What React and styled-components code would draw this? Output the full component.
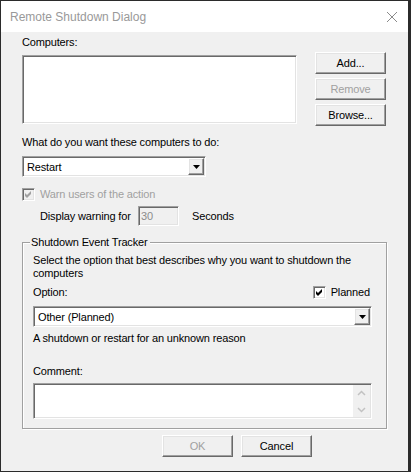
import React from "react";
import styled, { createGlobalStyle, css } from "styled-components";

const GlobalStyle = createGlobalStyle`
  html, body { margin: 0; padding: 0; background: #2b2b2b; }
  body { width: 411px; height: 472px; overflow: hidden; }
  #root { box-sizing: border-box; width: 411px; height: 472px; padding: 1px 0 0 1px; }
`;

const sunken = css`
  box-sizing: border-box;
  border: 1px solid;
  border-color: #a0a0a0 #ffffff #ffffff #a0a0a0;
  box-shadow: inset 1px 1px 0 #696969, inset -1px -1px 0 #e3e3e3;
`;

const raised = css`
  box-sizing: border-box;
  border: 1px solid;
  border-color: #ffffff #696969 #696969 #ffffff;
  box-shadow: inset -1px -1px 0 #a0a0a0, inset 1px 1px 0 #e3e3e3;
  background: #f0f0f0;
`;

const Window = styled.div`
  box-sizing: border-box;
  width: 407px;
  height: 470px;
  display: flex;
  flex-direction: column;
  background: #f0f0f0;
  font-family: "Liberation Sans", Arial, sans-serif;
  font-size: 11px;
  letter-spacing: -0.15px;
  color: #000;
`;

const TitleBar = styled.div`
  flex: none;
  height: 31px;
  background: #ffffff;
  display: flex;
  align-items: center;
  justify-content: space-between;
  padding: 0 10px 0 9px;
  font-family: "Liberation Sans", Arial, sans-serif;
  font-size: 12px;
  letter-spacing: normal;
  color: #999999;
`;

const Body = styled.div`
  flex: 1;
  display: flex;
  flex-direction: column;
  align-items: flex-start;
  padding-left: 21px;
`;

const Label = styled.div`
  line-height: 13px;
  white-space: nowrap;
  margin-top: ${(p) => p.$mt || 0}px;
  color: ${(p) => (p.$disabled ? "#a0a0a0" : "#000")};
`;

const TopRow = styled.div`
  display: flex;
  align-items: flex-start;
  margin-top: 3px;
`;

const ListBox = styled.div`
  ${sunken};
  background: #ffffff;
  width: 275px;
  height: 69px;
  margin-top: 3px;
`;

const ButtonColumn = styled.div`
  display: flex;
  flex-direction: column;
  gap: 4px;
  margin-left: 18px;
`;

const Button = styled.button`
  ${raised};
  width: 71px;
  height: 22px;
  padding: 0;
  font-family: "Liberation Sans", Arial, sans-serif;
  font-size: 11px;
  letter-spacing: -0.15px;
  color: ${(p) => (p.disabled ? "#a0a0a0" : "#000")};
`;

const Combo = styled.div`
  ${sunken};
  width: ${(p) => p.$w}px;
  height: 21px;
  margin-top: 7px;
  background: #ffffff;
  display: flex;
  align-items: center;
  padding: 1px 1px 1px 4px;
`;

const ComboText = styled.span`
  flex: 1;
  white-space: nowrap;
`;

const DropButton = styled.span`
  ${raised};
  width: 16px;
  height: 17px;
  display: flex;
  align-items: center;
  justify-content: center;
`;

const CheckRow = styled.div`
  display: flex;
  align-items: center;
  gap: 5px;
  margin-top: ${(p) => p.$mt || 0}px;
  margin-right: ${(p) => p.$mr || 0}px;
  color: ${(p) => (p.$disabled ? "#a0a0a0" : "#000")};
  line-height: 13px;
`;

const CheckBox = styled.span`
  ${sunken};
  width: 13px;
  height: 13px;
  background: ${(p) => (p.$disabled ? "#f0f0f0" : "#ffffff")};
  display: flex;
  align-items: center;
  justify-content: center;
`;

const WarnRow = styled.div`
  display: flex;
  align-items: center;
  height: 20px;
  margin-top: 5px;
  padding-left: 18px;
  line-height: 13px;
`;

const WarnLabel = styled.span`
  width: 98px;
  white-space: nowrap;
`;

const SmallEdit = styled.div`
  ${sunken};
  width: 41px;
  height: 20px;
  background: #f0f0f0;
  color: #8c8c8c;
  display: flex;
  align-items: center;
  padding-left: 2px;
`;

const Unit = styled.span`
  margin-left: 13px;
`;

const Group = styled.div`
  position: relative;
  box-sizing: border-box;
  width: 365px;
  margin-top: 16px;
  border: 1px solid #a0a0a0;
  box-shadow: 1px 1px 0 #ffffff, inset 1px 1px 0 #ffffff;
  padding: 11px 14px 9px 10px;
  display: flex;
  flex-direction: column;
`;

const Legend = styled.span`
  position: absolute;
  top: -7px;
  left: 7px;
  padding: 0 2px 0 1px;
  background: #f0f0f0;
  line-height: 13px;
  white-space: nowrap;
`;

const OptionRow = styled.div`
  display: flex;
  align-items: center;
  justify-content: space-between;
  margin-top: 6px;
  line-height: 13px;
`;

const CommentBox = styled.div`
  ${sunken};
  height: 36px;
  margin-top: 5px;
  background: #ffffff;
  display: flex;
  justify-content: flex-end;
  padding: 1px;
`;

const ScrollBar = styled.div`
  width: 17px;
  background: #f0f0f0;
  display: flex;
  flex-direction: column;
  justify-content: space-between;
`;

const ScrollArrow = styled.span`
  height: 15px;
  display: flex;
  align-items: center;
  justify-content: center;
`;

const Footer = styled.div`
  display: flex;
  gap: 8px;
  margin-top: 6px;
  margin-left: 140px;
`;

const Arrow = () => (
  <svg width="7" height="4" viewBox="0 0 7 4">
    <polygon points="0,0 7,0 3.5,4" fill="#000" />
  </svg>
);

const Check = ({ color }) => (
  <svg width="7" height="7" viewBox="0 0 7 7">
    <polygon points="0,2 2,4 6,0 6,3 2,7 0,5" fill={color} />
  </svg>
);

const Chevron = ({ up }) => (
  <svg width="9" height="6" viewBox="0 0 9 6">
    <polyline
      points={up ? "1,5 4.5,1.5 8,5" : "1,1 4.5,4.5 8,1"}
      fill="none"
      stroke="#c2c2c2"
      strokeWidth="1.5"
    />
  </svg>
);

const CloseIcon = () => (
  <svg width="12" height="12" viewBox="0 0 12 12">
    <path d="M1 1 L11 11 M11 1 L1 11" stroke="#8a8a8a" strokeWidth="1" fill="none" />
  </svg>
);

export default function App() {
  return (
    <>
      <GlobalStyle />
      <Window>
        <TitleBar>
          <span>Remote Shutdown Dialog</span>
          <CloseIcon />
        </TitleBar>
        <Body>
          <Label $mt={4}>Computers:</Label>
          <TopRow>
            <ListBox />
            <ButtonColumn>
              <Button>Add...</Button>
              <Button disabled>Remove</Button>
              <Button>Browse...</Button>
            </ButtonColumn>
          </TopRow>

          <Label $mt={10}>What do you want these computers to do:</Label>
          <Combo $w={184}>
            <ComboText>Restart</ComboText>
            <DropButton>
              <Arrow />
            </DropButton>
          </Combo>

          <CheckRow $mt={11} $disabled>
            <CheckBox $disabled>
              <Check color="#a0a0a0" />
            </CheckBox>
            <span>Warn users of the action</span>
          </CheckRow>

          <WarnRow>
            <WarnLabel>Display warning for</WarnLabel>
            <SmallEdit>30</SmallEdit>
            <Unit>Seconds</Unit>
          </WarnRow>

          <Group>
            <Legend>Shutdown Event Tracker</Legend>
            <Label>
              Select the option that best describes why you want to shutdown the
              <br />
              computers
            </Label>
            <OptionRow>
              <span>Option:</span>
              <CheckRow $mr={2}>
                <CheckBox>
                  <Check color="#000" />
                </CheckBox>
                <span>Planned</span>
              </CheckRow>
            </OptionRow>
            <Combo $w={339}>
              <ComboText>Other (Planned)</ComboText>
              <DropButton>
                <Arrow />
              </DropButton>
            </Combo>
            <Label $mt={5}>A shutdown or restart for an unknown reason</Label>
            <Label $mt={20}>Comment:</Label>
            <CommentBox>
              <ScrollBar>
                <ScrollArrow>
                  <Chevron up />
                </ScrollArrow>
                <ScrollArrow>
                  <Chevron />
                </ScrollArrow>
              </ScrollBar>
            </CommentBox>
          </Group>

          <Footer>
            <Button disabled>OK</Button>
            <Button>Cancel</Button>
          </Footer>
        </Body>
      </Window>
    </>
  );
}
